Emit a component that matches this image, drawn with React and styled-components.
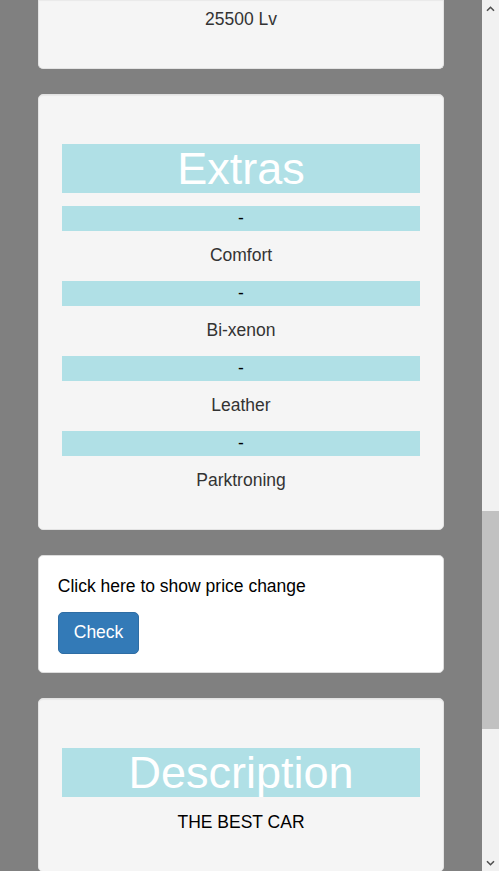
import React from "react";
import styled, { createGlobalStyle } from "styled-components";

const GlobalStyle = createGlobalStyle`
  html, body {
    margin: 0;
    padding: 0;
    height: 100%;
    overflow: hidden;
  }
  body {
    font-family: "Liberation Sans", Arial, sans-serif;
    font-size: 17.5px;
    line-height: 1.42857;
    color: #333;
  }
  * { box-sizing: border-box; }
`;

const Frame = styled.div`
  display: flex;
  height: 100vh;
  width: 100%;
`;

const Page = styled.main`
  flex: 1;
  min-width: 0;
  background: #808080;
  padding: 0 38px;
  overflow: hidden;
`;

const Well = styled.section`
  background: #f5f5f5;
  border: 1px solid #e3e3e3;
  border-radius: 5px;
  box-shadow: inset 0 1px 1px rgba(0, 0, 0, 0.05);
  padding: 23.75px 23.25px;
  margin-bottom: 25px;
  text-align: center;
  ${(p) =>
    p.$cut &&
    `
    border-top: none;
    border-top-left-radius: 0;
    border-top-right-radius: 0;
    padding-top: 6.75px;
  `}
`;

const Panel = styled.section`
  background: #fff;
  border: 1px solid #ddd;
  border-radius: 5px;
  padding: 18px 18.75px 18.25px;
  margin-bottom: 25px;
  color: #000;
`;

const Heading = styled.h1`
  margin: 25px 0 12.5px;
  background: #b0e0e6;
  color: #fff;
  font-size: 45px;
  line-height: 1.1;
  font-weight: normal;
`;

const Text = styled.p`
  margin: 0 0 12.5px;
  color: ${(p) => p.$color || "#333"};
`;

const Bar = styled.div`
  background: #b0e0e6;
  color: #000;
  margin-bottom: 12.5px;
`;

const Button = styled.button`
  font: inherit;
  font-size: 17.5px;
  line-height: 25px;
  color: #fff;
  background: #337ab7;
  border: 1px solid #2e6da4;
  border-radius: 5px;
  padding: 7.5px 15px;
  cursor: pointer;
`;

const Scrollbar = styled.aside`
  width: 17px;
  flex: none;
  background: #f1f1f1;
  display: flex;
  flex-direction: column;
`;

const Arrow = styled.div`
  height: 17px;
  flex: none;
  display: flex;
  align-items: center;
  justify-content: center;
`;

const TrackGap = styled.div`
  flex: ${(p) => (p.$h ? `0 0 ${p.$h}px` : "1")};
`;

const Thumb = styled.div`
  flex: 0 0 218px;
  background: #c1c1c1;
`;

const Chevron = ({ down }) => (
  <svg width="9" height="6" viewBox="0 0 9 6">
    <path
      d={down ? "M1 1.2 L4.5 4.7 L8 1.2" : "M1 4.8 L4.5 1.3 L8 4.8"}
      fill="none"
      stroke="#505050"
      strokeWidth="1.6"
    />
  </svg>
);

const extras = ["Comfort", "Bi-xenon", "Leather", "Parktroning"];

export default function App() {
  return (
    <>
      <GlobalStyle />
      <Frame>
        <Page>
          <Well $cut>
            <Text>25500 Lv</Text>
          </Well>
          <Well>
            <Heading>Extras</Heading>
            {extras.map((e) => (
              <React.Fragment key={e}>
                <Bar>-</Bar>
                <Text>{e}</Text>
              </React.Fragment>
            ))}
          </Well>
          <Panel>
            <Text $color="#000">Click here to show price change</Text>
            <Button>Check</Button>
          </Panel>
          <Well>
            <Heading>Description</Heading>
            <Text $color="#000">THE BEST CAR</Text>
          </Well>
        </Page>
        <Scrollbar>
          <Arrow>
            <Chevron />
          </Arrow>
          <TrackGap $h={494} />
          <Thumb />
          <TrackGap />
          <Arrow>
            <Chevron down />
          </Arrow>
        </Scrollbar>
      </Frame>
    </>
  );
}
